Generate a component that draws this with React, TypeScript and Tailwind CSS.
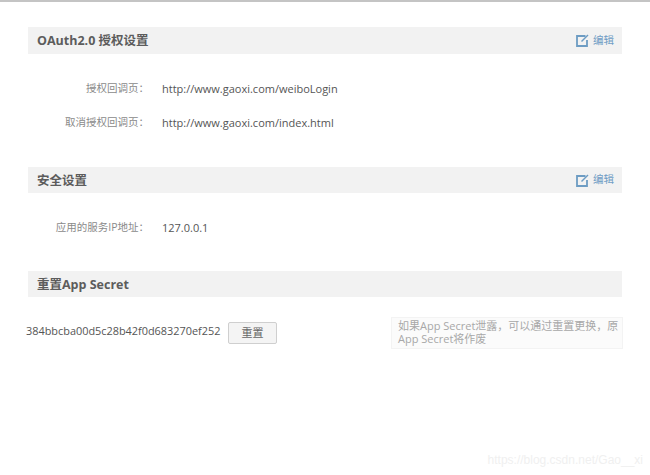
import { ReactNode } from 'react';

const font = { fontFamily: '"Open Sans", "Noto Sans CJK SC", sans-serif' };

function EditLink() {
  return (
    <a className="flex items-center gap-[4px] text-[10.5px] text-[#6f9cc4]">
      <svg width="13" height="13" viewBox="0 0 13 13" fill="none" stroke="#6d9cc3" strokeWidth="1.8">
        <path d="M9.5 2H1v10h10V6" />
        <path d="M5.5 7.5 12 1" strokeWidth="1.5" />
      </svg>
      <span>编辑</span>
    </a>
  );
}

function SectionHeader({ title, edit, height }: { title: string; edit?: boolean; height: string }) {
  return (
    <div className={`flex items-center justify-between bg-[#f2f2f2] pl-[9px] pr-[8px] ${height}`}>
      <h2 className="pt-[2px] text-[12.5px] font-bold text-[#5c5c5c]">{title}</h2>
      {edit && <EditLink />}
    </div>
  );
}

function Row({ label, value }: { label: string; value: ReactNode }) {
  return (
    <div className="flex items-center h-[18px]">
      <div className="w-[121px] text-right text-[10.5px] text-[#8a8a8a]">{label}</div>
      <div className="ml-[13px] text-[11px] text-[#555555]">{value}</div>
    </div>
  );
}

export default function App() {
  return (
    <div className="relative h-[475px] w-[650px] overflow-hidden bg-white" style={font}>
      <div className="h-[2px] bg-[#c4c4c4]" />
      <div className="px-[28px] pt-[25px]">
        <SectionHeader title="OAuth2.0 授权设置" edit height="h-[27px]" />
        <div className="mt-[26px] flex flex-col gap-[16px]">
          <Row label="授权回调页：" value="http://www.gaoxi.com/weiboLogin" />
          <Row label="取消授权回调页：" value="http://www.gaoxi.com/index.html" />
        </div>

        <div className="mt-[35px]">
          <SectionHeader title="安全设置" edit height="h-[26px]" />
        </div>
        <div className="mt-[26px]">
          <Row label="应用的服务IP地址：" value="127.0.0.1" />
        </div>

        <div className="mt-[34px]">
          <SectionHeader title="重置App Secret" height="h-[26px]" />
        </div>
        <div className="-ml-[2px] mt-[20px] flex items-start">
          <div className="mt-[6px] w-[194px] whitespace-nowrap text-[10.9px] text-[#555555]">384bbcba00d5c28b42f0d683270ef252</div>
          <button className="ml-[8px] mt-[5px] h-[22px] w-[49px] rounded-[2px] border border-[#cfcfcf] bg-[#f4f4f4] text-[11px] text-[#666666]">
            重置
          </button>
          <div className="ml-auto mr-[-1px] h-[32px] w-[232px] whitespace-nowrap border border-[#f3f3f3] bg-[#fbfbfb] px-[6px] py-[1px] text-[11px] leading-[13px] text-[#a8a8a8]">
            如果App Secret泄露，可以通过重置更换，原
            <br />
            App Secret将作废
          </div>
        </div>
      </div>
      <div className="absolute bottom-[6px] right-[7px] text-[12px] text-[#f0f0f0]" style={{ fontFamily: '"Liberation Sans", sans-serif' }}>
        https://blog.csdn.net/Gao__xi
      </div>
    </div>
  );
}
